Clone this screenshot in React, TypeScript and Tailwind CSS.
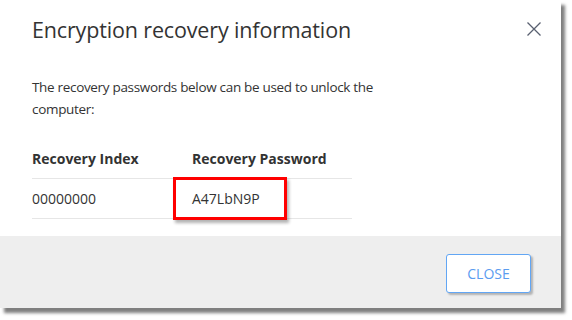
import React from 'react'

const font = { fontFamily: '"Open Sans", "Noto Sans", sans-serif' }

const CloseIcon = () => (
    <svg width="16" height="16" viewBox="0 0 16 16" fill="none" stroke="#596070" strokeWidth="1.3">
        <path d="M1.5 1.5 L14.5 14.5 M14.5 1.5 L1.5 14.5" />
    </svg>
)

export default function App() {
    return (
        <div className="w-[572px] h-[320px] bg-white text-[#333333]" style={font}>
            <div className="w-[561px] h-[308px] bg-white flex flex-col shadow-[4px_5px_3px_rgba(0,0,0,0.5)]">

                {/* HEADER */}
                <div className="flex items-start justify-between pl-8 pr-[19px] pt-[14px]">
                    <h1 className="text-[21.5px] leading-[32px] text-[#333333] tracking-[-0.15px]">
                        Encryption recovery information
                    </h1>
                    <button className="mt-[7px]">
                        <CloseIcon />
                    </button>
                </div>

                {/* BODY */}
                <div className="flex-1 pl-8">
                    <p className="mt-[30px] w-[380px] text-[13.5px] leading-[22px] tracking-[-0.32px] text-[#333333]">
                        The recovery passwords below can be used to unlock the computer:
                    </p>

                    <div className="w-[320px] text-[14px] leading-[22px]">
                        <div className="grid grid-cols-[160px_160px] border-b border-[#e6e6e6] pt-[28px] pb-[8px] font-bold">
                            <span>Recovery Index</span>
                            <span>Recovery Password</span>
                        </div>
                        <div className="grid grid-cols-[160px_160px] h-[40px] items-center border-b border-[#e6e6e6]">
                            <span>00000000</span>
                            <span className="relative">
                                A47LbN9P
                                <span className="absolute left-[-19px] top-[-11px] w-[114px] h-[43px] border-[3px] border-[#ff0000] shadow-[2px_3px_3px_rgba(0,0,0,0.3)]"></span>
                            </span>
                        </div>
                    </div>
                </div>

                {/* FOOTER */}
                <div className="h-[72px] bg-[#eeeeee] flex justify-end items-start pt-[18px] pr-[30px]">
                    <button className="w-[85px] h-[39px] bg-white border border-[#62a6f4] rounded-[3px] text-[14px] text-[#5b9cf0] shadow-[2px_2px_2px_rgba(0,0,0,0.25)]">
                        CLOSE
                    </button>
                </div>
            </div>
        </div>
    )
}
